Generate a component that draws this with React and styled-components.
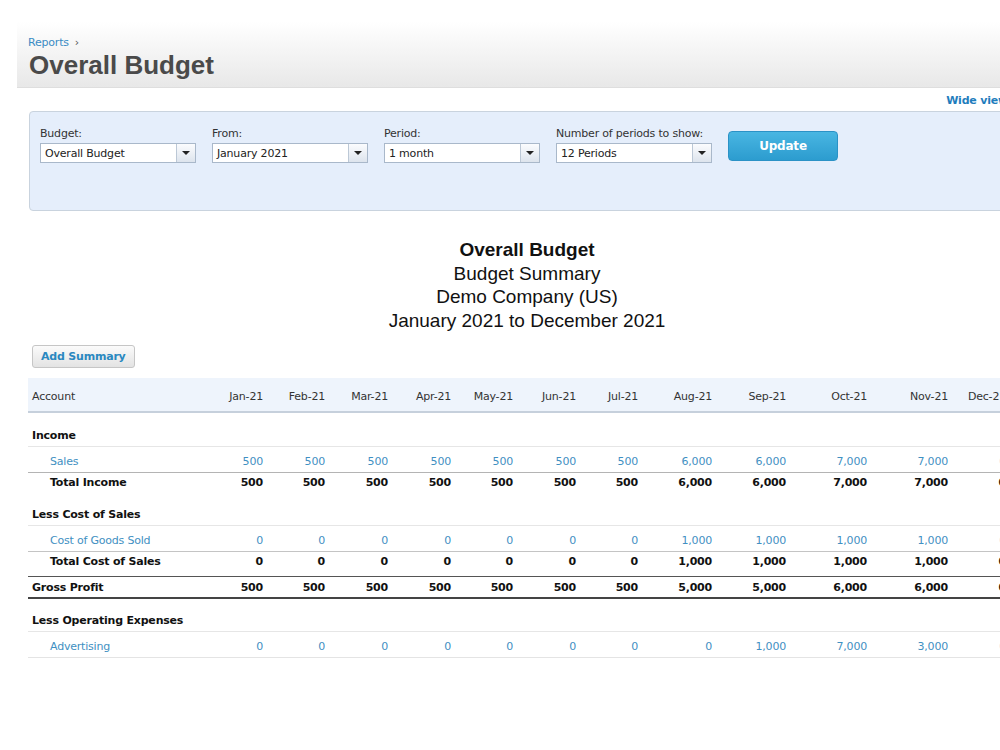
import styled, { createGlobalStyle } from 'styled-components';

const GlobalStyle = createGlobalStyle`
  html, body {
    margin: 0;
    padding: 0;
    background: #fff;
    overflow: hidden;
  }
  body {
    font-family: "DejaVu Sans", Verdana, sans-serif;
    font-size: 11px;
    letter-spacing: -0.2px;
    color: #222;
  }
`

const Page = styled.div`
  width: 1040px;
`

const TitleBar = styled.header`
  margin-left: 17px;
  height: 88px;
  box-sizing: border-box;
  padding: 36px 11px 0;
  background: linear-gradient(#ffffff 25%, #e8e8e8);
  border-bottom: 1px solid #dedede;
`

const Breadcrumb = styled.div`
  font-size: 11px;
  line-height: 14px;
  color: #3a8bc4;
  & span {
    color: #555;
    margin-left: 6px;
  }
`

const PageTitle = styled.h1`
  margin: 0 0 0 1px;
  font-family: "Liberation Sans", Arial, sans-serif;
  font-size: 26px;
  line-height: 30px;
  letter-spacing: 0;
  font-weight: bold;
  color: #4a4a4a;
`

const Content = styled.main`
  margin-left: 28px;
  width: 998px;
`

const ViewBar = styled.div`
  display: flex;
  justify-content: flex-end;
  height: 23px;
  padding: 2px 18px 0 0;
  box-sizing: border-box;
  align-items: center;
`

const WideLink = styled.a`
  font-weight: bold;
  font-size: 11px;
  color: #1f7dbd;
  text-decoration: none;
`

const FilterPanel = styled.section`
  margin-left: 1px;
  height: 100px;
  box-sizing: border-box;
  padding: 15px 10px 0;
  background: #e5eefb;
  border: 1px solid #c9d3de;
  border-radius: 4px;
  display: flex;
  align-items: flex-start;
  gap: 16px;
`

const Field = styled.div`
  width: 156px;
  display: flex;
  flex-direction: column;
  gap: 2px;
`

const FieldLabel = styled.label`
  line-height: 14px;
  color: #333;
`

const Select = styled.div`
  height: 20px;
  box-sizing: border-box;
  display: flex;
  background: #fff;
  border: 1px solid #a9b8ca;
`

const SelectValue = styled.div`
  flex: 1;
  padding-left: 4px;
  line-height: 19px;
  color: #222;
  white-space: nowrap;
  overflow: hidden;
`

const SelectArrow = styled.div`
  width: 18px;
  border-left: 1px solid #bcc8d6;
  background: linear-gradient(#fbfcfe, #dde4ed);
  display: flex;
  align-items: center;
  justify-content: center;
  &::after {
    content: '';
    border-left: 4px solid transparent;
    border-right: 4px solid transparent;
    border-top: 4px solid #222;
  }
`

const UpdateButton = styled.button`
  margin-top: 4px;
  width: 110px;
  height: 30px;
  border: 1px solid #2b92c6;
  border-radius: 4px;
  background: linear-gradient(#49b6e2, #2c9ccf);
  color: #fff;
  font-family: inherit;
  font-weight: bold;
  font-size: 12px;
  letter-spacing: -0.2px;
  cursor: pointer;
`

const ReportHeading = styled.div`
  margin-top: 27px;
  text-align: center;
  font-family: "Liberation Sans", Arial, sans-serif;
  font-size: 19px;
  line-height: 23.5px;
  letter-spacing: 0;
  color: #111;
  & strong {
    display: block;
  }
`

const AddButton = styled.button`
  margin: 13px 0 0 4px;
  height: 23px;
  padding: 0 8px;
  border: 1px solid #c6c6c6;
  border-radius: 3px;
  background: linear-gradient(#fbfbfb, #e3e3e3);
  color: #2a88c0;
  font-family: inherit;
  font-size: 11px;
  letter-spacing: -0.2px;
  font-weight: bold;
  cursor: pointer;
`

const Table = styled.table`
  margin-top: 10px;
  border-collapse: collapse;
  table-layout: fixed;
`

const HeadCell = styled.th`
  padding: 12px 5px 7px 4px;
  line-height: 14px;
  font-weight: normal;
  color: #333;
  text-align: ${props => props.$right ? 'right' : 'left'};
  background: #eef4fc;
  border-bottom: 2px solid #c6d0dc;
  white-space: nowrap;
`

const rowStyles = {
  section: 'padding: 3px 5px 3px 4px;',
  line: 'padding: 8px 5px 3px 4px;',
  total: 'padding: 3px 5px 7px 4px;',
  gross: 'padding: 4px 5px 2px 4px;',
}

const Row = styled.tr`
  border-bottom: ${props => props.$border || 'none'};
  border-top: ${props => props.$top || 'none'};
`

const Cell = styled.td`
  ${props => rowStyles[props.$kind]}
  line-height: 14px;
  white-space: nowrap;
  text-align: ${props => props.$right ? 'right' : 'left'};
  padding-left: ${props => props.$indent ? '22px' : '4px'};
  font-weight: ${props => props.$bold ? 'bold' : 'normal'};
  color: ${props => props.$link ? '#3f90c2' : '#111'};
`

const Spacer = styled.tr`
  height: ${props => props.$h}px;
`

const months = ['Jan-21', 'Feb-21', 'Mar-21', 'Apr-21', 'May-21', 'Jun-21', 'Jul-21', 'Aug-21', 'Sep-21', 'Oct-21', 'Nov-21', 'Dec-21'];
const widths = [63, 62, 63, 63, 62, 63, 62, 74, 74, 81, 81, 58];

const sales = [500, 500, 500, 500, 500, 500, 500, 6000, 6000, 7000, 7000, 0];
const cogs = [0, 0, 0, 0, 0, 0, 0, 1000, 1000, 1000, 1000, 0];
const gross = sales.map((v, i) => v - cogs[i]);
const advertising = [0, 0, 0, 0, 0, 0, 0, 0, 1000, 7000, 3000, 0];

const fmt = (n) => n.toLocaleString('en-US');

const filters = [
  { label: 'Budget:', value: 'Overall Budget' },
  { label: 'From:', value: 'January 2021' },
  { label: 'Period:', value: '1 month' },
  { label: 'Number of periods to show:', value: '12 Periods' },
];

const SectionRow = ({ title }) => (
  <Row $border="1px solid #e6e6e6">
    <Cell $kind="section" $bold>{title}</Cell>
    {months.map(m => <Cell key={m} $kind="section" />)}
  </Row>
)

const LineRow = ({ title, values, border }) => (
  <Row $border={border}>
    <Cell $kind="line" $indent $link>{title}</Cell>
    {values.map((v, i) => <Cell key={i} $kind="line" $right $link>{fmt(v)}</Cell>)}
  </Row>
)

const TotalRow = ({ title, values }) => (
  <Row>
    <Cell $kind="total" $indent $bold>{title}</Cell>
    {values.map((v, i) => <Cell key={i} $kind="total" $right $bold>{fmt(v)}</Cell>)}
  </Row>
)

const App = () => {
  return <Page>
    <GlobalStyle />
    <TitleBar>
      <Breadcrumb>Reports<span>›</span></Breadcrumb>
      <PageTitle>Overall Budget</PageTitle>
    </TitleBar>
    <Content>
      <ViewBar><WideLink href="#">Wide view</WideLink></ViewBar>
      <FilterPanel>
        {filters.map(f => (
          <Field key={f.label}>
            <FieldLabel>{f.label}</FieldLabel>
            <Select>
              <SelectValue>{f.value}</SelectValue>
              <SelectArrow />
            </Select>
          </Field>
        ))}
        <UpdateButton>Update</UpdateButton>
      </FilterPanel>
      <ReportHeading>
        <strong>Overall Budget</strong>
        <div>Budget Summary</div>
        <div>Demo Company (US)</div>
        <div>January 2021 to December 2021</div>
      </ReportHeading>
      <AddButton>Add Summary</AddButton>
      <Table>
        <colgroup>
          <col style={{ width: 177 }} />
          {widths.map((w, i) => <col key={i} style={{ width: w }} />)}
        </colgroup>
        <thead>
          <tr>
            <HeadCell>Account</HeadCell>
            {months.map(m => <HeadCell key={m} $right>{m}</HeadCell>)}
          </tr>
        </thead>
        <tbody>
          <Spacer $h={14}><td colSpan={13} /></Spacer>
          <SectionRow title="Income" />
          <LineRow title="Sales" values={sales} border="1px solid #b4b4b4" />
          <TotalRow title="Total Income" values={sales} />
          <Spacer $h={8}><td colSpan={13} /></Spacer>
          <SectionRow title="Less Cost of Sales" />
          <LineRow title="Cost of Goods Sold" values={cogs} border="1px solid #c4c4c4" />
          <TotalRow title="Total Cost of Sales" values={cogs} />
          <Row $top="1px solid #555" $border="2px solid #444">
            <Cell $kind="gross" $bold>Gross Profit</Cell>
            {gross.map((v, i) => <Cell key={i} $kind="gross" $right $bold>{fmt(v)}</Cell>)}
          </Row>
          <Spacer $h={13}><td colSpan={13} /></Spacer>
          <SectionRow title="Less Operating Expenses" />
          <LineRow title="Advertising" values={advertising} border="1px solid #e4e4e4" />
        </tbody>
      </Table>
    </Content>
  </Page>
}

export default App;
